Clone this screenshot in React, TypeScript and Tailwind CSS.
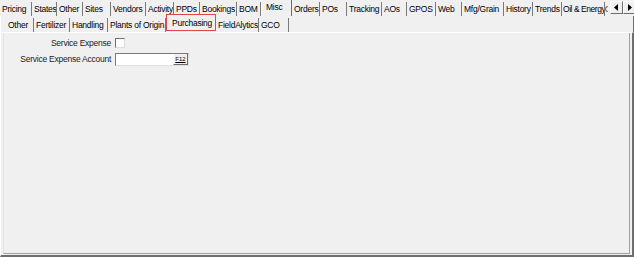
import React from "react";

type Tab = { label: string; w: number; selected?: boolean; tight?: boolean };

const top: Tab[] = [
  { label: "Pricing", w: 32 },
  { label: "States", w: 25 },
  { label: "Other", w: 26 },
  { label: "Sites", w: 28 },
  { label: "Vendors", w: 35 },
  { label: "Activity", w: 28 },
  { label: "PPDs", w: 26 },
  { label: "Bookings", w: 37 },
  { label: "BOM", w: 24 },
  { label: "Misc", w: 31, selected: true },
  { label: "Orders", w: 28 },
  { label: "POs", w: 27 },
  { label: "Tracking", w: 35 },
  { label: "AOs", w: 25 },
  { label: "GPOS", w: 29 },
  { label: "Web", w: 26 },
  { label: "Mfg/Grain", w: 42 },
  { label: "History", w: 29 },
  { label: "Trends", w: 29 },
  { label: "Oil & Energy", w: 43, tight: true },
];

const second: Tab[] = [
  { label: "Other", w: 28 },
  { label: "Fertilizer", w: 36 },
  { label: "Handling", w: 38 },
  { label: "Plants of Origin", w: 58 },
  { label: "Purchasing", w: 50, selected: true },
  { label: "FieldAlytics", w: 43 },
  { label: "GCO", w: 30 },
];

function TabItem({ t }: { t: Tab }) {
  if (t.selected) {
    return (
      <div
        className="h-full shrink-0 flex items-start pl-[4px] pt-[1px] border-l border-l-white border-r border-r-[#6e6e6e] bg-[#f0f0f0] whitespace-nowrap"
        style={{ width: t.w }}
      >
        {t.label}
      </div>
    );
  }
  return (
    <div
      className={
        "h-[14px] mt-[2px] shrink-0 flex items-center border-r border-r-[#7a7a7a] whitespace-nowrap overflow-hidden " +
        (t.tight ? "pl-[1px] tracking-[-0.45px]" : "pl-[2px]")
      }
      style={{ width: t.w }}
    >
      {t.label}
    </div>
  );
}

export default function App() {
  return (
    <div
      className="w-[634px] h-[257px] bg-[#f0f0f0] text-[8.5px] tracking-[-0.25px] text-black flex flex-col overflow-hidden"
      style={{ fontFamily: '"Liberation Sans", Arial, sans-serif' }}
    >
      {/* Top tab row */}
      <div className="h-[16px] flex shrink-0">
        {top.map((t) => (
          <TabItem key={t.label} t={t} />
        ))}
        <div className="h-[14px] mt-[2px] w-[4px] shrink-0 flex items-center">
          <div className="w-[3px] h-[6px] border-l border-t border-b border-[#777] rounded-l-[3px]" />
        </div>
        <div className="flex h-[13px] mt-[1px] ml-[1px]">
          <div className="w-[13px] h-[13px] bg-[#f0f0f0] border border-t-white border-l-white border-r-[#6e6e6e] border-b-[#6e6e6e] flex items-center justify-center">
            <svg width="5" height="7" viewBox="0 0 5 7"><path d="M4 0 L0 3.5 L4 7 Z" fill="#000" /></svg>
          </div>
          <div className="w-[12px] h-[13px] bg-[#f0f0f0] border border-t-white border-l-white border-r-[#6e6e6e] border-b-[#6e6e6e] flex items-center justify-center">
            <svg width="5" height="7" viewBox="0 0 5 7"><path d="M1 0 L5 3.5 L1 7 Z" fill="#000" /></svg>
          </div>
        </div>
      </div>

      {/* Second tab row */}
      <div className="h-[16px] flex shrink-0 pl-[5px] border-l border-l-white border-r border-r-[#6e6e6e]">
        {second.map((t) =>
          t.selected ? (
            <div
              key={t.label}
              className="h-[17px] -mt-[2px] shrink-0 border border-[#e0474c] flex items-start pl-[5px] pt-[2px] whitespace-nowrap bg-[#f0f0f0] relative z-10"
              style={{ width: t.w }}
            >
              {t.label}
            </div>
          ) : (
            <TabItem key={t.label} t={t} />
          )
        )}
      </div>

      {/* Panel */}
      <div className="flex-1 flex flex-col border-l border-l-white border-r-[2px] border-r-[#6e6e6e] border-b-[2px] border-b-[#6e6e6e] border-t border-t-white">
        <div className="flex-1 mx-[2px] mb-[1px] border-l border-l-[#e4e4e4] border-r border-r-[#a0a0a0] border-b border-b-[#a0a0a0] pt-[4px]">
          <div className="grid grid-cols-[107px_auto] gap-x-[4px] gap-y-[3px] items-center">
            <div className="text-right text-[#222]">Service Expense</div>
            <div className="w-[10px] h-[10px] bg-white border border-t-[#707070] border-l-[#707070] border-r-[#dcdcdc] border-b-[#dcdcdc]" />
            <div className="text-right text-[#222]">Service Expense Account</div>
            <div className="w-[74px] h-[13px] bg-white border border-t-[#7a7a7a] border-l-[#7a7a7a] border-r-[#e0e0e0] border-b-[#e0e0e0] flex justify-end">
              <div className="w-[15px] h-full bg-[#f0f0f0] border-l border-l-white border-r border-r-[#6e6e6e] border-b border-b-[#6e6e6e] flex items-center justify-center text-[6px] tracking-normal leading-none underline">
                F12
              </div>
            </div>
          </div>
        </div>
      </div>
    </div>
  );
}
